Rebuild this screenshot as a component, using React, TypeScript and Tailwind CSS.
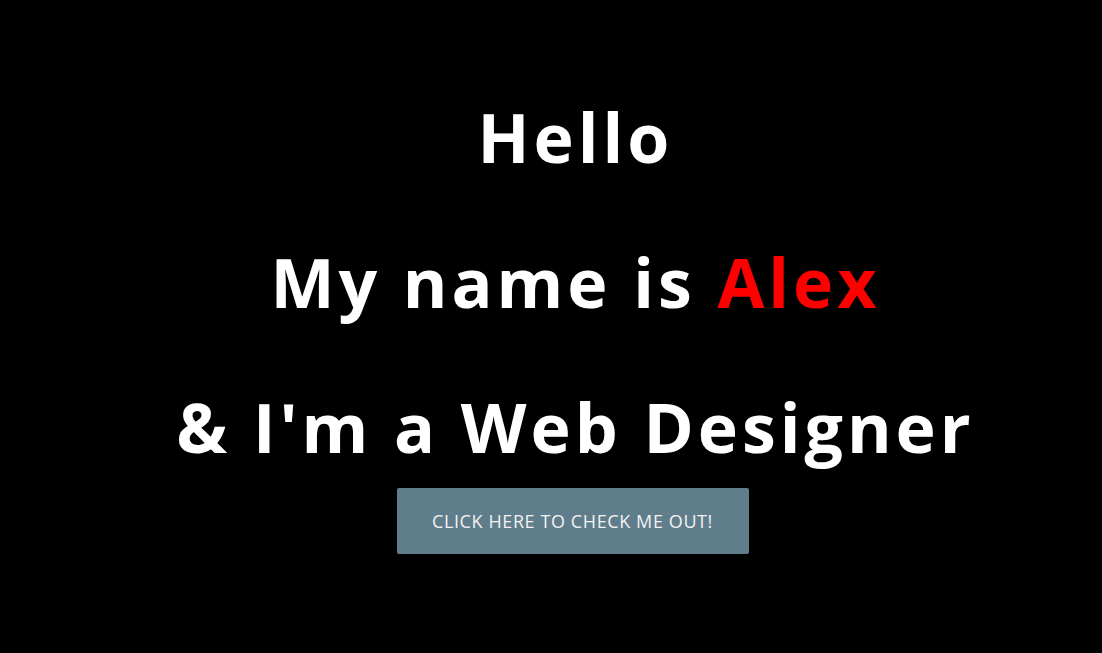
export default function App() {
  return (
    <div className="flex h-[653px] w-full flex-col items-center bg-black pl-[49px] pt-[97px] font-['Open_Sans',sans-serif]">
      <div className="flex flex-col items-center gap-[65px] text-[68px] font-bold leading-[80px] tracking-[4px] text-white">
        <h1>Hello</h1>
        <h1>
          My name is <span className="text-[#ff0000]">Alex</span>
        </h1>
        <h1>&amp; I'm a Web Designer</h1>
      </div>
      <button
        type="button"
        className="mr-[6px] mt-[21px] flex h-[66px] w-[352px] items-center justify-center rounded-[2px] bg-[#607d8b] text-[18px] uppercase tracking-[0.6px] text-[#f2f2f2]"
      >
        Click here to check me out!
      </button>
    </div>
  );
}
